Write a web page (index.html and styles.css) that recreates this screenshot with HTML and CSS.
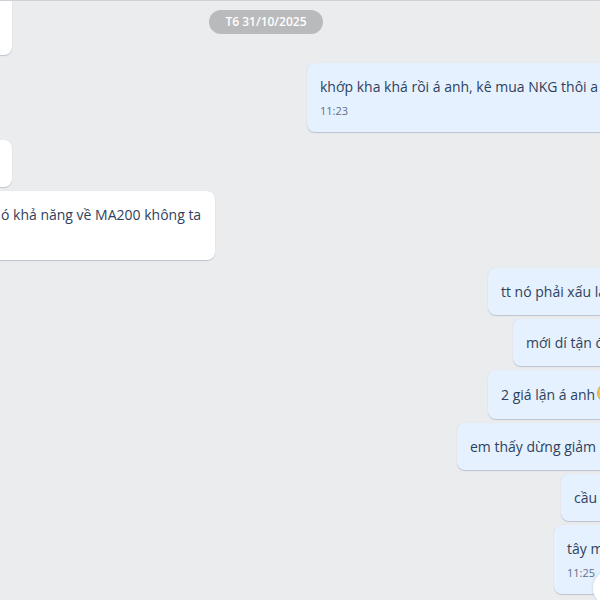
FILE: index.html
```
<!DOCTYPE html>
<html lang="vi">
<head>
    <meta charset="UTF-8">
    <meta name="viewport" content="width=device-width, initial-scale=1.0">
    <title>Chat</title>
    <link rel="stylesheet" href="styles.css">
</head>
<body>

    <main class="chat">
        <div class="date-row">
            <div class="bubble received stub tall"></div>
            <div class="date">T6 31/10/2025</div>
        </div>

        <div class="group sent-group">
            <div class="bubble sent w-full">
                <p>khớp kha khá rồi á anh, kê mua NKG thôi a n</p>
                <time>11:23</time>
            </div>
        </div>

        <div class="group">
            <div class="bubble received stub"></div>
            <div class="bubble received question">
                <p>ó khả năng về MA200 không ta</p>
            </div>
        </div>

        <div class="group sent-group">
            <div class="bubble sent w-medium"><p>tt nó phải xấu lắ</p></div>
            <div class="bubble sent w-small"><p>mới dí tận đ</p></div>
            <div class="bubble sent w-medium with-emoji">
                <p>2 giá lận á anh<svg class="emoji" viewBox="0 0 20 20" role="img" aria-label="cười">
                        <circle cx="10" cy="10" r="9.5" fill="#f7bf4f" stroke="#e5a13a"/>
                        <path d="M5 8q2-3 4 0M11 8q2-3 4 0M5 11q5 8 10 0z" fill="none" stroke="#6b4516"/>
                    </svg>
                </p>
            </div>
            <div class="bubble sent w-large"><p>em thấy dừng giảm</p></div>
            <div class="bubble sent w-tiny"><p>cầu</p></div>
            <div class="bubble sent w-mini">
                <p>tây m</p>
                <time>11:25</time>
            </div>
        </div>
    </main>

    <button class="scroll-down" aria-label="Xuống cuối">
        <svg viewBox="0 0 16 16" width="16" height="16"><path d="M3 5l5 5 5-5" fill="none" stroke="#5a6981" stroke-width="2"/></svg>
    </button>

</body>
</html>
```
FILE: styles.css
```
* {
    box-sizing: border-box;
}

body {
    margin: 0;
    min-height: 100vh;
    overflow: hidden;
    background-color: #ebecee;
    border-top: 1px solid #d0d1d4;
    font-family: "Open Sans", "Noto Sans", sans-serif;
    color: #2f415c;
}

.chat {
    display: flex;
    flex-direction: column;
    gap: 8px;
}

.date-row {
    display: flex;
    align-items: flex-start;
    padding-right: 80px;
}

/* Date separator */
.date {
    margin: 9px auto 0;
    padding: 0 16px;
    border-radius: 12px;
    background-color: #b9babc;
    color: #fff;
    font-size: 12px;
    font-weight: 600;
    line-height: 24px;
}

.group {
    display: flex;
    flex-direction: column;
    align-items: flex-start;
    gap: 4px;
}

.sent-group {
    align-items: flex-end;
}

/* Message bubbles */
.bubble {
    min-height: 47px;
    padding: 12px 13px;
    border-radius: 8px;
    box-shadow: 0 1px 1px #bcc4d0, 0 0 1px #d3d9e2;
    white-space: nowrap;
}

.bubble p {
    margin: 0;
    font-size: 14px;
    line-height: 23px;
}

.bubble time {
    display: block;
    margin-top: 4px;
    font-size: 11px;
    line-height: 18px;
    color: #5f6e86;
}

.received {
    border-top-left-radius: 0;
    border-bottom-left-radius: 0;
    background-color: #fff;
}

.stub {
    width: 12px;
    padding: 0;
}

.tall {
    min-height: 54px;
    border-top-right-radius: 0;
}

.question {
    min-height: 69px;
    padding-left: 1px;
    padding-right: 14px;
}

/* Sent bubbles run up to the right edge of the window */
.sent {
    padding-right: 0;
    border-top-right-radius: 0;
    border-bottom-right-radius: 0;
    background-color: #e5f1ff;
    overflow: hidden;
}

.w-full {
    width: 293px;
}

.w-large {
    width: 143px;
}

.w-medium {
    width: 112px;
}

.w-small {
    width: 87px;
}

.w-mini {
    width: 46px;
}

.w-tiny {
    width: 39px;
}

.with-emoji {
    min-height: 49px;
    padding-top: 13px;
}

.emoji {
    width: 20px;
    height: 20px;
    margin-left: 2px;
    vertical-align: -3px;
}

/* Floating button over the conversation */
.scroll-down {
    position: absolute;
    right: -29px;
    bottom: -6px;
    width: 36px;
    height: 36px;
    padding: 0;
    border: none;
    border-radius: 50%;
    background-color: #fff;
    box-shadow: 0 0 3px #c3ccd9;
    cursor: pointer;
}
```
